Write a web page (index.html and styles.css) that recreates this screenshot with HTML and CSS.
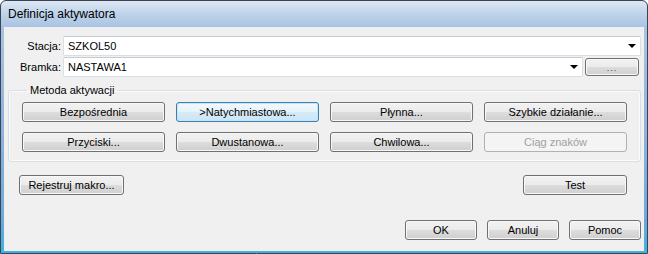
FILE: index.html
```html
<!DOCTYPE html>
<html lang="pl">

<head>
    <meta charset="UTF-8">
    <meta name="viewport" content="width=device-width, initial-scale=1.0">
    <title>Definicja aktywatora</title>
    <link rel="stylesheet" href="styles.css">
</head>

<body>
    <div class="window">
        <!-- Pasek tytułu -->
        <div class="title-bar">Definicja aktywatora</div>

        <div class="client">
            <!-- Stacja / Bramka -->
            <div class="field-row">
                <label class="field-label">Stacja:</label>
                <div class="combo">
                    <span>SZKOL50</span>
                    <span class="arrow"></span>
                </div>
            </div>
            <div class="field-row second">
                <label class="field-label">Bramka:</label>
                <div class="combo">
                    <span>NASTAWA1</span>
                    <span class="arrow"></span>
                </div>
                <button class="btn browse-btn">...</button>
            </div>

            <!-- Metoda aktywacji -->
            <fieldset class="group">
                <legend>Metoda aktywacji</legend>
                <div class="method-grid">
                    <button class="btn">Bezpośrednia</button>
                    <button class="btn default">&gt;Natychmiastowa...</button>
                    <button class="btn">Płynna...</button>
                    <button class="btn">Szybkie działanie...</button>
                    <button class="btn">Przyciski...</button>
                    <button class="btn">Dwustanowa...</button>
                    <button class="btn">Chwilowa...</button>
                    <button class="btn" disabled>Ciąg znaków</button>
                </div>
            </fieldset>

            <div class="macro-row">
                <button class="btn macro-btn">Rejestruj makro...</button>
                <button class="btn test-btn">Test</button>
            </div>

            <div class="dialog-buttons">
                <button class="btn dlg-btn">OK</button>
                <button class="btn dlg-btn">Anuluj</button>
                <button class="btn dlg-btn">Pomoc</button>
            </div>
        </div>
    </div>
</body>

</html>
```

FILE: styles.css
```css
* {
    margin: 0;
    padding: 0;
    box-sizing: border-box;
    font-family: "Liberation Sans", Arial, sans-serif;
}

body {
    background-color: #ffffff;
    width: 648px;
    height: 254px;
    overflow: hidden;
}

.window {
    width: 648px;
    height: 254px;
    border: 1px solid #3a4452;
    border-radius: 6px 6px 0 0;
    background: linear-gradient(to bottom, #dde8f4 0, #bcd1e9 14px, #a9c4e2 26px, #8fb3dc 50%, #6fa9da 85%, #3bb2de 100%);
    display: flex;
    flex-direction: column;
    overflow: hidden;
}

.title-bar {
    height: 26px;
    padding: 0 0 0 7px;
    display: flex;
    align-items: center;
    font-size: 12px;
    color: #000;
}

.client {
    flex: 1;
    margin: 0 3px 2px 3px;
    background-color: #f0f0f0;
    padding: 9px 3px 0 4px;
    display: flex;
    flex-direction: column;
    font-size: 11px;
    color: #000;
}

.field-row {
    display: flex;
    align-items: center;
    height: 20px;
}

.field-row.second {
    margin-top: 1px;
}

.field-label {
    width: 53px;
    text-align: right;
    margin-right: 2px;
    font-size: 11px;
}

.combo {
    flex: 1;
    height: 20px;
    background-color: #ffffff;
    border: 1px solid #dadfe4;
    border-top-color: #c5cbd2;
    border-radius: 2px;
    display: flex;
    align-items: center;
    justify-content: space-between;
    padding: 0 4px;
}

.arrow {
    width: 0;
    height: 0;
    border-left: 4px solid transparent;
    border-right: 4px solid transparent;
    border-top: 4px solid #000;
}

.btn {
    height: 20px;
    font-size: 11px;
    color: #000;
    border: 1px solid #707070;
    border-radius: 3px;
    background: linear-gradient(to bottom, #f2f2f2 0%, #ebebeb 50%, #dddddd 50%, #cfcfcf 100%);
    box-shadow: inset 0 0 0 1px #f8f8f8;
    cursor: pointer;
}

.btn.default {
    border-color: #3c7fb1;
    background: linear-gradient(to bottom, #f2f9fd 0%, #e6f3fb 50%, #d6ebf8 50%, #cbe4f5 100%);
    box-shadow: inset 0 0 0 1px #c6e4f7;
}

.btn:disabled {
    border-color: #adb2b5;
    background: #f4f4f4;
    box-shadow: none;
    color: #a0a0a0;
    cursor: default;
}

.browse-btn {
    width: 54px;
    height: 18px;
    margin: 0 2px 0 2px;
    font-size: 9px;
    color: #2a4a7a;
    letter-spacing: 1px;
    padding-top: 2px;
}

.group {
    margin-top: 7px;
    border: 1px solid #d5dfe5;
    border-radius: 3px;
    padding: 5px 13px 9px 13px;
    box-shadow: inset 0 0 0 1px #fbfbfb;
}

.group legend {
    margin-left: 5px;
    padding: 0 3px;
    line-height: 13px;
    font-size: 11px;
}

.method-grid {
    display: grid;
    grid-template-columns: repeat(4, 143px);
    grid-auto-rows: 20px;
    column-gap: 11px;
    row-gap: 10px;
}

.macro-row {
    margin-top: 13px;
    display: flex;
    justify-content: space-between;
}

.macro-btn {
    width: 105px;
    margin-left: 11px;
}

.test-btn {
    width: 104px;
    margin-right: 14px;
}

.dialog-buttons {
    margin-top: 25px;
    display: flex;
    justify-content: flex-end;
    gap: 10px;
}

.dlg-btn {
    width: 72px;
}
```
